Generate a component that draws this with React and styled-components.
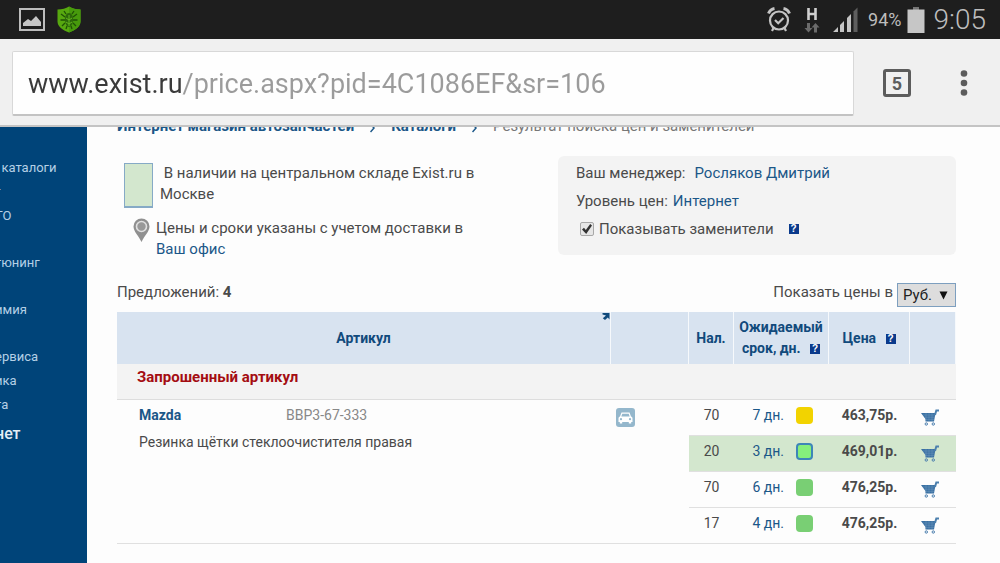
import React from 'react'
import styled, { createGlobalStyle } from 'styled-components';

const GlobalStyle = createGlobalStyle`
    *{
        box-sizing: border-box;
    }
    body{
        margin: 0;
        background-color: #fdfdfd;
        color: #4a4a4a;
        font-family: Roboto, "Liberation Sans", sans-serif;
        font-size: 15px;
        line-height: 21px;
    }
`;

const Page = styled.div`
    display: flex;
    flex-direction: column;
    height: 100vh;
    overflow: hidden;
`;

const StatusBar = styled.div`
    display: flex;
    align-items: center;
    justify-content: space-between;
    flex: none;
    height: 39px;
    padding: 0 14px 0 19px;
    background-color: #1e1e1e;
    color: #bdbdbd;
`;

const StatusGroup = styled.div`
    display: flex;
    align-items: center;
    gap: ${props=>props.$gap}px;
`;

const Battery = styled.div`
    display: flex;
    align-items: center;
    gap: 5px;
    margin-left: -3px;
    font-size: 18px;
`;

const Clock = styled.time`
    font-size: 28px;
    font-weight: 300;
    margin-left: -4px;
`;

const Toolbar = styled.header`
    display: flex;
    align-items: center;
    flex: none;
    height: 88px;
    padding: 2px 12px 0;
    background-color: #f0f0f0;
    border-bottom: 2px solid #c4c4c4;
`;

const AddressBox = styled.div`
    flex: 1;
    height: 65px;
    padding: 2px 15px 0;
    background-color: #fefefe;
    border: 1px solid #d8d8d8;
    border-bottom: 2px solid #c3c3c3;
    border-radius: 2px;
`;

/* the host part is dark, the path after it is grey */
const Address = styled.input`
    width: 100%;
    height: 100%;
    padding: 0;
    border: 0;
    outline: 0;
    font-family: inherit;
    font-size: 27px;
    color: transparent;
    background: linear-gradient(90deg, #3a3a3a 155px, #9b9b9b 155px);
    background-clip: text;
`;

const ToolButton = styled.button`
    display: flex;
    align-items: center;
    justify-content: center;
    width: ${props=>props.$width}px;
    height: 48px;
    padding: 0;
    border: 0;
    background: none;
    color: #5c5c5c;
`;

const TabCount = styled.span`
    display: flex;
    align-items: center;
    justify-content: center;
    width: 28px;
    height: 28px;
    border: 3px solid #5c5c5c;
    border-radius: 3px;
    font-family: Roboto, "Liberation Sans", sans-serif;
    font-size: 18px;
    font-weight: 700;
`;

const Content = styled.div`
    display: flex;
    flex: 1;
    min-height: 0;
    overflow: hidden;
`;

const Sidebar = styled.nav`
    flex: none;
    width: 87px;
    padding-top: 28px;
    overflow: hidden;
    background-color: #004479;
`;

/* the menu runs out past the left edge of the window */
const SideList = styled.ul`
    list-style: none;
    margin: 0 0 0 -5px;
    padding: 0;
`;

const SideItem = styled.li`
    display: flex;
    align-items: flex-end;
    height: ${props=>props.$lines * 23 + 1}px;
    line-height: 23px;

    &:last-child{
        height: 29px;
    }
`;

const SideLink = styled.a`
    color: ${props=>props.$strong ? '#e4eef6' : '#b5d0e6'};
    font-size: ${props=>props.$strong ? 16 : 13}px;
    font-weight: ${props=>props.$strong ? 500 : 400};
    text-decoration: none;
    white-space: pre;
`;

const Main = styled.main`
    flex: 1;
    min-width: 0;
    padding: 0 44px 0 30px;
`;

/* scrolled half under the toolbar */
const Breadcrumbs = styled.div`
    display: flex;
    gap: 16px;
    margin-top: -11px;
    white-space: nowrap;
    color: #777777;
`;

const Link = styled.a`
    color: #1b5788;
    font-weight: ${props=>props.$bold ? 700 : 400};
    text-decoration: none;
`;

const Info = styled.div`
    display: flex;
    justify-content: space-between;
    align-items: flex-start;
    gap: 48px;
    margin-top: 19px;
`;

const Legend = styled.div`
    display: flex;
    flex-direction: column;
    gap: 10px;
    flex: 1;
    max-width: 376px;
    padding: 7px 0 0 7px;
`;

const LegendItem = styled.div`
    display: flex;
    align-items: flex-start;
    gap: ${props=>props.$gap}px;
    padding-left: ${props=>props.$indent}px;

    svg{
        flex: none;
    }
`;

const Swatch = styled.div`
    flex: none;
    width: 29px;
    height: 45px;
    background-color: #d3e7ce;
    border: 1px solid #86aac6;
    border-bottom-width: 2px;
`;

const LegendText = styled.p`
    margin: 0;
    white-space: pre-wrap;
`;

const Manager = styled.section`
    flex: none;
    width: 398px;
    height: 99px;
    padding: 3px 18px;
    background-color: #f3f3f3;
    border-radius: 6px;
`;

const ManagerRow = styled.div`
    display: flex;
    align-items: center;
    gap: ${props=>props.$gap || 5}px;
    height: 28px;
`;

const Check = styled.input`
    appearance: none;
    display: flex;
    width: 14px;
    height: 14px;
    margin: 0 0 0 4px;
    border: 1px solid #a8a8a8;
    border-radius: 2px;
    background-color: #e6e6e6;

    &:checked::after{
        content: "";
        flex: 1;
        margin: 1px;
        background-color: #333333;
        clip-path: polygon(0 55%, 20% 38%, 38% 60%, 82% 0, 100% 14%, 42% 100%);
    }
`;

const Help = styled.button`
    display: inline-flex;
    align-items: center;
    justify-content: center;
    width: 10px;
    height: 10px;
    margin-left: ${props=>props.$gap}px;
    padding: 0;
    border: 0;
    background-color: #0a3a8c;
    color: white;
    font-family: "Liberation Sans", sans-serif;
    font-size: 10px;
    font-weight: 700;
    line-height: 10px;
    vertical-align: middle;
`;

const ListBar = styled.div`
    display: flex;
    align-items: flex-start;
    justify-content: space-between;
    margin: 22px 0 5px;
`;

const Currency = styled.label`
    display: flex;
    align-items: flex-start;
    gap: 4px;
`;

const Select = styled.select`
    grid-area: 1 / 1;
    appearance: none;
    width: 100%;
    height: 24px;
    padding: 0 5px;
    border: 1px solid #7d9fbf;
    border-radius: 0;
    background-color: #dddddd;
    color: #222222;
    font-family: inherit;
    font-size: 15px;
`;

const SelectBox = styled.span`
    display: grid;
    align-items: center;
    width: 59px;
    padding-top: 1px;
`;

const Arrow = styled.svg`
    grid-area: 1 / 1;
    justify-self: end;
    margin-right: 8px;
    pointer-events: none;
`;

const Table = styled.table`
    width: 100%;
    table-layout: fixed;
    border-collapse: separate;
    border-spacing: 0;
    font-size: 14px;
`;

const Th = styled.th`
    width: ${props=>props.$width ? props.$width + 'px' : 'auto'};
    height: 52px;
    padding: 0;
    background-color: #d8e3f0;
    border-right: 1px solid #f6f9fc;
    color: #114a7c;
    font-weight: 700;
    white-space: nowrap;
`;

const ArticleHead = styled.div`
    display: flex;
    justify-content: flex-end;
    height: 52px;

    span{
        flex: 1;
        align-self: center;
        padding-left: 8px;
        text-align: center;
    }
`;

const Section = styled.td`
    height: 36px;
    padding: 0 20px 8px;
    background-color: #f3f3f3;
    border-bottom: 1px solid #dddddd;
    color: #a40d12;
    font-size: 15px;
    font-weight: 700;
`;

const Td = styled.td`
    height: 36px;
    padding: 0 0 4px;
    text-align: center;
    border-bottom: 1px solid #e0e0e0;
    background-color: ${props=>props.$stock ? '#d3e7ce' : 'transparent'};
    font-weight: ${props=>props.$bold ? 700 : 400};
    white-space: nowrap;
`;

const Article = styled(Td)`
    padding: 5px 22px;
    text-align: left;
    vertical-align: top;
`;

const PartName = styled.div`
    display: grid;
    grid-template-columns: 147px 1fr;
    margin-bottom: 6px;
    color: #888888;
`;

const CarCell = styled(Td)`
    padding: 8px 5px;
    text-align: left;
    vertical-align: top;
`;

const IconButton = styled.button`
    display: inline-flex;
    padding: 0;
    border: 0;
    background: none;
`;

const Term = styled.div`
    display: flex;
    align-items: center;
    justify-content: flex-end;
    gap: 12px;
    padding-right: 16px;
`;

const Dot = styled.span`
    width: 17px;
    height: 17px;
    border-radius: 4px;
    background-color: ${props=>props.$fill};
    border: ${props=>props.$ring ? '2px solid #3d86b8' : '0'};
`;

const CartButton = styled(IconButton)`
    margin: 2px 6px 0 0;
    vertical-align: middle;
`;

const sideItems = [
  { text: '  каталоги', lines: 1 },
  { text: 'г', lines: 1 },
  { text: 'ТО', lines: 1 },
  { text: 'тюнинг', lines: 2 },
  { text: 'имия', lines: 2 },
  { text: 'ервиса', lines: 2 },
  { text: 'ика', lines: 1 },
  { text: 'та', lines: 1 },
];

const offers = [
  { count: 70, days: 7, fill: '#f2d300', price: '463,75р.' },
  { count: 20, days: 3, fill: '#85f07c', price: '469,01р.', stock: true },
  { count: 70, days: 6, fill: '#79cf74', price: '476,25р.' },
  { count: 17, days: 4, fill: '#79cf74', price: '476,25р.' },
];

const PictureIcon = () => (
  <svg width="26" height="23" viewBox="0 0 26 23">
    <rect x="1" y="1" width="24" height="21" fill="none" stroke="#bdbdbd" strokeWidth="2"/>
    <path d="M4 18v-3l5-4 3 2 5-5 5 6v4z" fill="#c6c6c6"/>
  </svg>
)

const ShieldIcon = () => (
  <svg width="24" height="27" viewBox="0 0 24 27">
    <path d="M12 0.500c3 2 7 3 11.500 3v12c0 5-5 8.500-11.500 11-6.500-2.500-11.500-6-11.500-11v-12c4.500 0 8.500-1 11.500-3z" fill="#57a80f"/>
    <path d="M12 0.500c3 2 7 3 11.500 3v12c0 5-5 8.500-11.500 11z" fill="#479a0c"/>
    <g fill="none" stroke="#1f5206" strokeWidth="1.300">
      <path d="M9 8l-2-3M15 8l2-3M8 11l-4-3M16 11l4-3M8 14H3.500M16 14h4.500M8 17l-3 3M16 17l3 3M10 20l-1 3M14 20l1 3"/>
    </g>
    <path d="M12 7c3 0 4 3 4 6.500S14.500 21 12 21s-4-4-4-7.500S9 7 12 7z" fill="#2c680a"/>
    <path d="M12 9v11M9 12l3 2 3-2M9 16l3 2 3-2" stroke="#63b51c" strokeWidth="1" fill="none"/>
  </svg>
)

const AlarmIcon = () => (
  <svg width="24" height="25" viewBox="0 0 24 25" fill="none" stroke="#c4c4c4" strokeWidth="2.200">
    <circle cx="12" cy="13.500" r="9"/>
    <path d="M8 13l3.200 3.200L16.500 11"/>
    <path d="M1.500 6.500C2.500 4 4.500 2 7.500 1.500M22.500 6.500C21.500 4 19.500 2 16.500 1.500" strokeWidth="3"/>
    <path d="M6.500 21l-1.500 3M17.500 21l1.500 3"/>
  </svg>
)

const DataIcon = () => (
  <svg width="16" height="26" viewBox="0 0 16 26">
    <path d="M4.500 1v12M11.500 1v12M4.500 7h7" stroke="#d0d0d0" strokeWidth="2.600" fill="none"/>
    <path d="M3 16h3v5h2.500L4.500 25.500 0.500 21H3zM10 25.500h3v-5h2.500L11.500 16l-4 4.500H10z" fill="#6b6b6b"/>
  </svg>
)

const SignalIcon = () => (
  <svg width="25" height="25" viewBox="0 0 25 25">
    <path d="M0 25l5-5v5zM7 25v-7l4-4v11zM14 25V11l4-4v18z" fill="#c4c4c4"/>
    <path d="M20.500 25V4.500L24.500 0.500v24.500z" fill="#5e5e5e"/>
  </svg>
)

const BatteryIcon = () => (
  <svg width="18" height="26" viewBox="0 0 18 26">
    <path d="M6 0h6v3H6z" fill="#757575"/>
    <path d="M0.500 2.500h17V26H0.500z" fill="#c6c6c6"/>
  </svg>
)

const PinIcon = () => (
  <svg width="17" height="25" viewBox="0 0 17 25">
    <path d="M8.500 0.500a8 8 0 0 1 8 8c0 5-5 9-8 15.500C5.500 17.500 0.500 13.500 0.500 8.500a8 8 0 0 1 8-8z" fill="#909090"/>
    <circle cx="8.500" cy="8.500" r="5" fill="#999999" stroke="#e0e0e0" strokeWidth="1.600"/>
  </svg>
)

const SortIcon = () => (
  <svg width="8" height="8" viewBox="0 0 8 8">
    <path d="M0.500 1h7v6.500L5.800 5.600 3 8 0.800 6.200 4 3.400 0.500 2.600z" fill="#0f4a7b"/>
  </svg>
)

const CarIcon = () => (
  <svg width="19" height="19" viewBox="0 0 19 19">
    <rect width="19" height="19" rx="3" fill="#94b7cc"/>
    <path d="M5.500 4.500h8l1.500 4c1 .3 1.500 1 1.500 2V14h-1.300v1.500h-2.400V14H6.200v1.500H3.800V14H2.500v-3.500c0-1 .5-1.700 1.500-2z" fill="#ffffff"/>
    <path d="M6.300 5.800h6.400l1 2.700H5.300z" fill="#94b7cc"/>
    <circle cx="5" cy="11.200" r="1.100" fill="#94b7cc"/>
    <circle cx="14" cy="11.200" r="1.100" fill="#94b7cc"/>
  </svg>
)

const CartIcon = () => (
  <svg width="18" height="17" viewBox="0 0 18 17">
    <path d="M0 4h14.500l-1.500 8.500H4.500V10z" fill="#3a70a3"/>
    <path d="M2 6h11.500M3.500 8.200h9.500M5 10.400h8M5 4v8M8 4v8M11 4v8" stroke="#6f98be" strokeWidth="0.500"/>
    <path d="M18 1.500h-2.700L14 6" fill="none" stroke="#4d80ae" strokeWidth="2"/>
    <circle cx="5.300" cy="15" r="1.200" fill="none" stroke="#4a7eae"/>
    <circle cx="12.300" cy="15" r="1.200" fill="none" stroke="#4a7eae"/>
  </svg>
)

const CrumbArrow = () => (
  <svg width="5" height="21" viewBox="0 0 5 21" fill="none" stroke="#1b5788" strokeWidth="1.500">
    <path d="M0.500 8l3.500 4-3.500 4"/>
  </svg>
)

const App = () => {
  return (
    <Page>
        <GlobalStyle/>
        <StatusBar>
            <StatusGroup $gap={12}>
                <PictureIcon/>
                <ShieldIcon/>
            </StatusGroup>
            <StatusGroup $gap={13}>
                <AlarmIcon/>
                <DataIcon/>
                <SignalIcon/>
                <Battery>94% <BatteryIcon/></Battery>
                <Clock>9:05</Clock>
            </StatusGroup>
        </StatusBar>
        <Toolbar>
            <AddressBox>
                <Address aria-label="URL" type="text" defaultValue="www.exist.ru/price.aspx?pid=4C1086EF&sr=106"/>
            </AddressBox>
            <ToolButton $width={86}>
                <TabCount>5</TabCount>
            </ToolButton>
            <ToolButton $width={48}>
                <svg width="8" height="26" viewBox="0 0 8 26" fill="#5c5c5c">
                    <circle cx="4" cy="3.500" r="3.300"/>
                    <circle cx="4" cy="13" r="3.300"/>
                    <circle cx="4" cy="22.500" r="3.300"/>
                </svg>
            </ToolButton>
        </Toolbar>
        <Content>
            <Sidebar>
                <SideList>
                    {sideItems.map((item) => (
                        <SideItem key={item.text} $lines={item.lines}>
                            <SideLink href="#">{item.text}</SideLink>
                        </SideItem>
                    ))}
                    <SideItem $lines={1}>
                        <SideLink href="#" $strong>нет</SideLink>
                    </SideItem>
                </SideList>
            </Sidebar>
            <Main>
                <Breadcrumbs>
                    <Link href="#" $bold>Интернет магазин автозапчастей</Link>
                    <CrumbArrow/>
                    <Link href="#" $bold>Каталоги</Link>
                    <CrumbArrow/>
                    <span>Результат поиска цен и заменителей</span>
                </Breadcrumbs>
                <Info>
                    <Legend>
                        <LegendItem $gap={7} $indent={0}>
                            <Swatch/>
                            <LegendText>{' '}В наличии на центральном складе Exist.ru в Москве</LegendText>
                        </LegendItem>
                        <LegendItem $gap={6} $indent={9}>
                            <PinIcon/>
                            <LegendText>Цены и сроки указаны с учетом доставки в <Link href="#">Ваш офис</Link></LegendText>
                        </LegendItem>
                    </Legend>
                    <Manager>
                        <ManagerRow $gap={9}>Ваш менеджер: <Link href="#">Росляков Дмитрий</Link></ManagerRow>
                        <ManagerRow>Уровень цен: <Link href="#">Интернет</Link></ManagerRow>
                        <ManagerRow>
                            <Check id="analogs" type="checkbox" defaultChecked/>
                            <label htmlFor="analogs">Показывать заменители</label>
                            <Help $gap={10}>?</Help>
                        </ManagerRow>
                    </Manager>
                </Info>
                <ListBar>
                    <span>Предложений: <b>4</b></span>
                    <Currency>
                        Показать цены в
                        <SelectBox>
                            <Select defaultValue="rub">
                                <option value="rub">Руб.</option>
                            </Select>
                            <Arrow width="9" height="9" viewBox="0 0 9 9"><path d="M0.500 0.500h8l-4 8z" fill="#111111"/></Arrow>
                        </SelectBox>
                    </Currency>
                </ListBar>
                <Table>
                    <thead>
                        <tr>
                            <Th>
                                <ArticleHead><span>Артикул</span><SortIcon/></ArticleHead>
                            </Th>
                            <Th $width={78}></Th>
                            <Th $width={45}>Нал.</Th>
                            <Th $width={95}>Ожидаемый<br/>срок, дн. <Help $gap={6}>?</Help></Th>
                            <Th $width={81}>Цена <Help $gap={6}>?</Help></Th>
                            <Th $width={46}></Th>
                        </tr>
                    </thead>
                    <tbody>
                        <tr>
                            <Section colSpan={6}>Запрошенный артикул</Section>
                        </tr>
                        {offers.map((offer, i) => (
                            <tr key={i}>
                                {i === 0 && (
                                    <>
                                        <Article rowSpan={4}>
                                            <PartName><Link href="#" $bold>Mazda</Link><span>BBP3-67-333</span></PartName>
                                            Резинка щётки стеклоочистителя правая
                                        </Article>
                                        <CarCell rowSpan={4}>
                                            <IconButton aria-label="Применимость"><CarIcon/></IconButton>
                                        </CarCell>
                                    </>
                                )}
                                <Td $stock={offer.stock}>{offer.count}</Td>
                                <Td $stock={offer.stock}>
                                    <Term>
                                        <Link href="#">{offer.days} дн.</Link>
                                        <Dot $fill={offer.fill} $ring={offer.stock}/>
                                    </Term>
                                </Td>
                                <Td $stock={offer.stock} $bold>{offer.price}</Td>
                                <Td $stock={offer.stock}>
                                    <CartButton aria-label="В корзину"><CartIcon/></CartButton>
                                </Td>
                            </tr>
                        ))}
                    </tbody>
                </Table>
            </Main>
        </Content>
    </Page>
  )
}

export default App
